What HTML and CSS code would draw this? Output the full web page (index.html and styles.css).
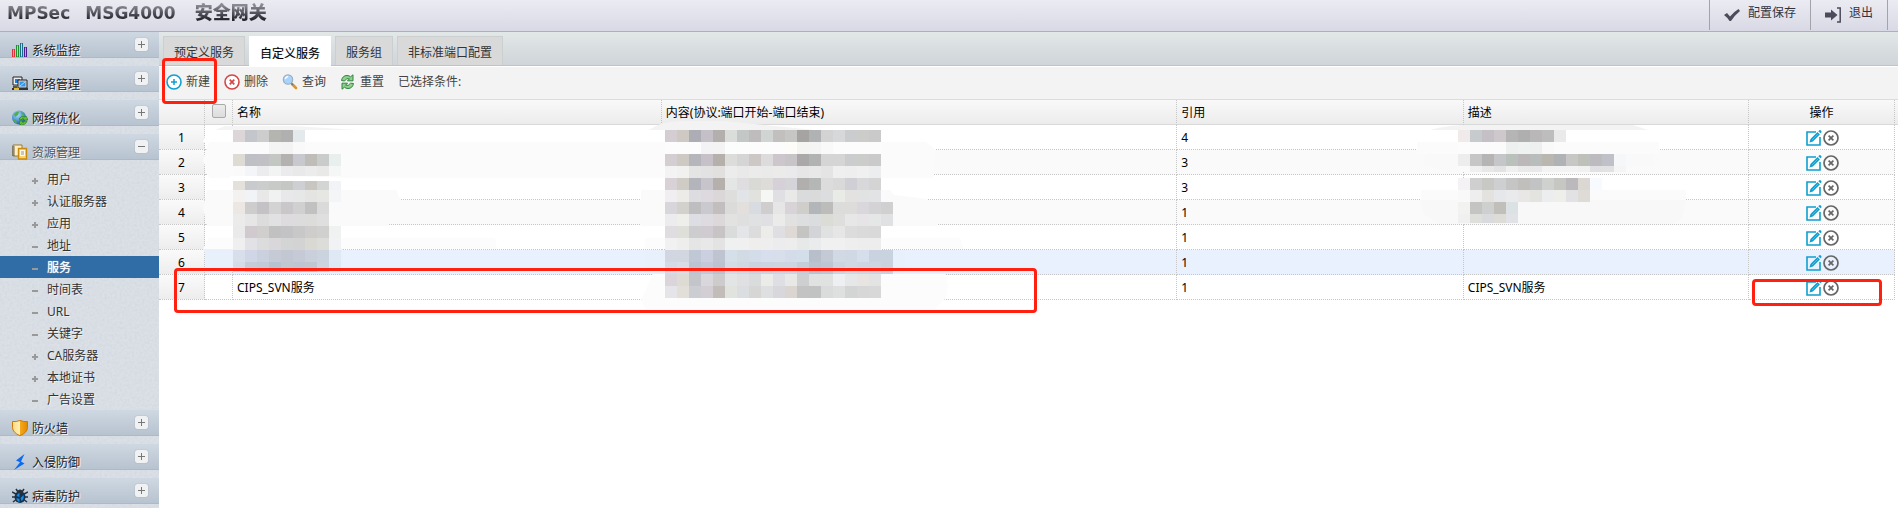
FILE: index.html
```html
<!DOCTYPE html>
<html lang="zh-CN">
<head>
<meta charset="utf-8">
<title>MPSec MSG4000 安全网关</title>
<link rel="stylesheet" href="styles.css">
</head>
<body>
<svg class="defs" width="0" height="0" aria-hidden="true">
  <linearGradient id="shield" x1="0" x2="1"><stop offset="0" stop-color="#ffd97a"/><stop offset=".5" stop-color="#fff0b8"/><stop offset=".52" stop-color="#f6a81c"/><stop offset="1" stop-color="#e08a00"/></linearGradient>
  <radialGradient id="globe" cx=".4" cy=".3" r=".7"><stop offset="0" stop-color="#a8dcff"/><stop offset="1" stop-color="#1c64b4"/></radialGradient>
  <symbol id="i-edit" viewBox="0 0 16 16"><path d="M10 2H1v13h13V7" fill="none" stroke="#0f9fd0" stroke-width="1.6"/><path d="M3.500 12.500l1-3.400L11.500 2l2.400 2.400-7 7z" fill="#0f9fd0"/><path d="M12.300 1.300l1-1q.8-.5 1.600.3t.6 1.700l-1 1z" fill="#0f9fd0"/><path d="M6 10l6-6" stroke="#7fd0ea" stroke-width=".6"/></symbol>
  <symbol id="i-del" viewBox="0 0 16 16"><circle cx="8" cy="8" r="7" fill="none" stroke="#666" stroke-width="1.700"/><path d="M5.600 5.600l4.800 4.800M10.400 5.600l-4.800 4.800" stroke="#666" stroke-width="1.700"/></symbol>
</svg>

<header class="topbar">
  <h1 class="brand"><span>MPSec</span><span>MSG4000</span><span class="brand-cn">安全网关</span></h1>
  <div class="top-actions">
    <button class="top-btn" type="button"><svg width="16" height="16" viewBox="0 0 16 16"><path d="M0 8l3-2 3 3.500Q9.500 5 14.500 2L16 4Q11 8 7 14H5.500Q4 11 0 8z" fill="#4b4b5c"/></svg>配置保存</button>
    <button class="top-btn" type="button"><svg width="16" height="16" viewBox="0 0 16 16"><path d="M0 5.500h6V2.500l6.500 5.500L6 13.500v-3H0z" fill="#4b4b5c"/><path d="M12 1h3.200v14H12" fill="none" stroke="#4b4b5c" stroke-width="1.500"/></svg>退出</button>
  </div>
</header>

<div class="shell">
  <nav class="sidebar">
    <svg class="grain" aria-hidden="true"><filter id="noise"><feTurbulence type="fractalNoise" baseFrequency=".4" numOctaves="2" seed="4"/><feColorMatrix values="0 0 0 0 .5  0 0 0 0 .56  0 0 0 0 .65  .5 0 0 0 -.17"/></filter><rect width="100%" height="100%" filter="url(#noise)"/></svg>
    <div class="group">
      <svg class="g-icon" viewBox="0 0 16 16"><path d="M0 7h3v8H0z" fill="#e0323c"/><path d="M1.500 7.500v7" stroke="#ff9aa0"/><path d="M4 3h3v12H4z" fill="#1f8f2f"/><path d="M5.500 3.500v11" stroke="#9ce69f"/><path d="M8 1h3v14H8z" fill="#1a6f88"/><path d="M9.500 1.500v13" stroke="#a5e2ee"/><path d="M12 5h3v10h-3z" fill="#4a1d8c"/><path d="M13.500 5.500v9" stroke="#c4a1e8"/></svg>
      <span>系统监控</span><button class="toggle plus" type="button" aria-label="展开系统监控"></button></div>
    <div class="group">
      <svg class="g-icon" viewBox="0 0 16 16"><path d="M1 1h9v8H1z" fill="#eee" stroke="#222"/><path d="M3 3h5v4H3z" fill="#1f7fe0"/><path d="M6 4h9v8H6z" fill="#ddd" stroke="#222"/><path d="M7.500 5.500h6v5h-6z" fill="#2f95ee"/><path d="M8 10l5-4" stroke="#a9dbff"/><path d="M0 13h16" stroke="#333" stroke-width="2"/><path d="M1 10h4v2H1z" fill="#555"/><path d="M2 13h5" stroke="#e7bd27" stroke-width="2"/></svg>
      <span>网络管理</span><button class="toggle plus" type="button" aria-label="展开网络管理"></button></div>
    <div class="group">
      <svg class="g-icon" viewBox="0 0 16 16"><circle cx="7" cy="7.500" r="7" fill="url(#globe)"/><path d="M2 4q3-3 5-2l-1 3-3 2zM1 9l3 1 1 4q-3-1-4-5zM9 2l4 2-3 1z" fill="#4fae4b"/><path d="M7 9q2-4 6-2l1-1 2 4h-5l1-1q-2-1-3 1zM15 11q-2 5-6 3l-1 1-1-4h4l-1 1q2 1 3-1z" fill="#63c529" stroke="#277d18" stroke-width=".7"/></svg>
      <span>网络优化</span><button class="toggle plus" type="button" aria-label="展开网络优化"></button></div>
    <div class="group open">
      <svg class="g-icon" viewBox="0 0 16 16"><path d="M1 1h9v11H1z" fill="#fff0bd" stroke="#a37821"/><path d="M0 3h3M0 5h3M0 7h3M0 9h3M0 11h3" stroke="#444" stroke-width=".8"/><path d="M6.500 4.500h8v10.500h-8z" fill="#ffd467" stroke="#c98a12" stroke-width="1.400"/><path d="M8 6h5v6H8z" fill="#fffbe8"/><path d="M9 8h3M9 10h3" stroke="#777" stroke-width=".8"/></svg>
      <span>资源管理</span><button class="toggle minus" type="button" aria-label="收起资源管理"></button></div>
    <ul class="menu">
      <li><a class="more" href="#">用户</a></li>
      <li><a class="more" href="#">认证服务器</a></li>
      <li><a class="more" href="#">应用</a></li>
      <li><a href="#">地址</a></li>
      <li><a class="current" href="#">服务</a></li>
      <li><a href="#">时间表</a></li>
      <li><a href="#">URL</a></li>
      <li><a href="#">关键字</a></li>
      <li><a class="more" href="#">CA服务器</a></li>
      <li><a class="more" href="#">本地证书</a></li>
      <li><a href="#">广告设置</a></li>
    </ul>
    <div class="group">
      <svg class="g-icon" viewBox="0 0 16 16"><path d="M.5 1.500Q4 2 8 .5q4 1.500 7.500 1v6q0 5-7.500 8.200Q.5 12.500.5 7.500z" fill="url(#shield)" stroke="#c97a08"/></svg>
      <span>防火墙</span><button class="toggle plus" type="button" aria-label="展开防火墙"></button></div>
    <div class="group">
      <svg class="g-icon" viewBox="0 0 16 16"><path d="M12.500 0L4 6.500l4 1.800L2 16l10.500-6.500L9 7.500z" fill="#0a6cf5"/></svg>
      <span>入侵防御</span><button class="toggle plus" type="button" aria-label="展开入侵防御"></button></div>
    <div class="group">
      <svg class="g-icon" viewBox="0 0 16 16"><path d="M4 1l2 3M12 1l-2 3M0 4l4 2M16 4l-4 2M0 9h4M16 9h-4M1 14l4-3M15 14l-4-3" stroke="#26313d" stroke-width="1.500"/><ellipse cx="8" cy="9" rx="5.500" ry="6" fill="#16324a"/><circle cx="8" cy="4" r="2.500" fill="#26313d"/><path d="M4.500 8q1-3 3-3v4zM8.500 10l3-3q1 4-2 6zM4.500 10l3 1v3q-3-1-3-4z" fill="#1589e8"/></svg>
      <span>病毒防护</span><button class="toggle plus" type="button" aria-label="展开病毒防护"></button></div>
  </nav>

  <main class="main">
    <div class="tabs" role="tablist">
      <button class="tab" role="tab" type="button">预定义服务</button>
      <button class="tab active" role="tab" type="button" aria-selected="true">自定义服务</button>
      <button class="tab" role="tab" type="button">服务组</button>
      <button class="tab" role="tab" type="button">非标准端口配置</button>
    </div>
    <div class="toolbar">
      <button class="tool marked" type="button"><svg width="16" height="16" viewBox="0 0 16 16"><circle cx="8" cy="8" r="7" fill="#fff" stroke="#0f9fd0" stroke-width="1.600"/><path d="M8 5v6M5 8h6" stroke="#0f9fd0" stroke-width="1.500"/></svg>新建</button>
      <button class="tool" type="button"><svg width="16" height="16" viewBox="0 0 16 16"><circle cx="8" cy="8" r="7" fill="#fff" stroke="#d64545" stroke-width="1.600"/><path d="M5.700 5.700l4.600 4.600M10.300 5.700l-4.600 4.600" stroke="#d64545" stroke-width="1.700"/></svg>删除</button>
      <button class="tool" type="button"><svg width="16" height="16" viewBox="0 0 16 16"><path d="M10 10l4 4" stroke="#d9962f" stroke-width="2.600" stroke-linecap="round"/><path d="M9 9l2 2" stroke="#777" stroke-width="1.500"/><circle cx="6" cy="5.500" r="4.700" fill="#a9d4fa" stroke="#9bb0c6" stroke-width="1.200"/><path d="M3.200 5q.8-2.300 3-2.500" fill="none" stroke="#fff" stroke-width="1.400"/></svg>查询</button>
      <button class="tool" type="button"><svg width="16" height="16" viewBox="0 0 16 16"><path d="M1.500 6.500Q2.500 1.500 7 1.500q2.200 0 3.500 1.300L13 .8v6H7.500l2-2Q6.500 3.500 4.500 7zM13.500 9.500Q12.500 14.500 8 14.500q-2.200 0-3.500-1.300L2 15.200v-6h5.500l-2 2q3 1.300 5-2z" fill="#8fd08f" stroke="#2f8540" stroke-width="1"/></svg>重置</button>
      <span class="picked">已选择条件:</span>
    </div>
    <div class="grid-wrap">
      <table class="grid">
        <colgroup><col class="c-no"><col class="c-check"><col class="c-name"><col class="c-content"><col class="c-ref"><col class="c-desc"><col class="c-op"></colgroup>
        <thead>
          <tr><th></th><th class="check"><input type="checkbox" aria-label="全选"></th><th>名称<svg class="mosaic m-name" data-mosaic="name" width="432" height="170"></svg></th><th>内容(协议:端口开始-端口结束)<svg class="mosaic m-content" data-mosaic="content" width="300" height="170"></svg></th><th>引用</th><th>描述<svg class="mosaic m-desc" data-mosaic="desc" width="240" height="100"></svg></th><th class="op">操作</th></tr>
        </thead>
        <tbody>
          <tr><td class="no">1</td><td></td><td></td><td></td><td>4</td><td></td><td class="op"></td></tr>
          <tr><td class="no">2</td><td></td><td></td><td></td><td>3</td><td></td><td class="op"></td></tr>
          <tr><td class="no">3</td><td></td><td></td><td></td><td>3</td><td></td><td class="op"></td></tr>
          <tr><td class="no">4</td><td></td><td></td><td></td><td>1</td><td></td><td class="op"></td></tr>
          <tr><td class="no">5</td><td></td><td></td><td></td><td>1</td><td></td><td class="op"></td></tr>
          <tr class="hover"><td class="no">6</td><td></td><td></td><td></td><td>1</td><td></td><td class="op"></td></tr>
          <tr><td class="no">7</td><td></td><td>CIPS_SVN服务</td><td></td><td>1</td><td>CIPS_SVN服务</td><td class="op"></td></tr>
        </tbody>
      </table>
      <div class="mark mark-row"></div>
      <div class="mark mark-op"></div>
    </div>
  </main>
</div>
<script src="app.js"></script>
</body>
</html>
```

FILE: styles.css
```css
* { box-sizing: border-box; }
body {
  margin: 0;
  min-height: 100vh;
  display: flex;
  flex-direction: column;
  overflow: hidden;
  background: #fff;
  color: #000;
  font: 12px/18px "Noto Sans", "Noto Sans CJK SC", sans-serif;
}
button { font: inherit; color: inherit; border: 0; background: none; padding: 0; margin: 0; }
.defs { position: absolute; }

/* top bar */
.topbar {
  display: flex;
  justify-content: space-between;
  height: 32px;
  border-bottom: 1px solid #aeaebc;
  background: linear-gradient(#ebebf2, #d9d9e6);
}
.brand {
  display: flex;
  align-items: center;
  gap: 15px;
  height: 26px;
  margin: 0 0 0 7px;
  font: bold 17px/26px "DejaVu Sans", "Noto Sans CJK SC", sans-serif;
}
.brand span {
  background: linear-gradient(#8a8a92 20%, #26262e 75%);
  -webkit-background-clip: text;
  background-clip: text;
  color: transparent;
}
.brand .brand-cn { margin-left: 4px; font-size: 18px; font-weight: 900; }
.top-actions { display: flex; height: 30px; padding-right: 10px; }
.top-btn {
  display: flex;
  align-items: center;
  gap: 8px;
  padding: 0 14px 4px;
  border-left: 1px solid #a3a3ab;
  color: #33333f;
}
.top-btn:last-child { border-right: 1px solid #a3a3ab; }
.top-btn svg { margin-top: 3px; }

.shell { display: flex; flex: 1; height: calc(100vh - 32px); }

/* side navigation */
.sidebar { position: relative; flex: 0 0 159px; overflow: hidden; background: #dbe0e6; }
.grain { position: absolute; inset: 0; width: 100%; height: 100%; }
.group {
  position: relative;
  display: flex;
  align-items: center;
  gap: 4px;
  height: 34px;
  padding: 4px 11px 0 12px;
  background: linear-gradient(#cfd8e2, #b7c3d0 25px, #a9bac8 25px) no-repeat 0 0 / 100% 26px;
  color: #1c1c1c;
  text-shadow: 1px 1px 0 #f4f6f8;
}
.group.open { color: #555; }
.g-icon { width: 16px; height: 16px; flex: none; margin-top: -2px; }
.toggle {
  align-self: flex-start;
  width: 13px;
  height: 13px;
  margin: 2px 0 0 auto;
  border-radius: 2px;
  box-shadow: 0 0 1px #888;
  background: linear-gradient(#777, #777) center / 7px 1px no-repeat, #f0f1f3;
}
.toggle.plus {
  background: linear-gradient(#777, #777) center / 7px 1px no-repeat, linear-gradient(#777, #777) center / 1px 7px no-repeat, #f0f1f3;
}
.menu { position: relative; margin: 0; padding: 0; list-style: none; }
.menu a {
  display: flex;
  align-items: center;
  gap: 9px;
  height: 22px;
  padding: 2px 0 0 32px;
  color: #333;
  text-decoration: none;
  text-shadow: 1px 1px 0 #eef1f4;
}
.menu a::before {
  content: "";
  width: 6px;
  height: 6px;
  margin-top: 2px;
  background: linear-gradient(#999, #999) center / 6px 2px no-repeat;
}
.menu .more::before {
  background: linear-gradient(#999, #999) center / 6px 2px no-repeat, linear-gradient(#999, #999) center / 2px 6px no-repeat;
}
.menu .current { background: #306da6; color: #fff; text-shadow: 0 0 1px #fff; }

/* tabs and toolbar */
.main { flex: 1; min-width: 0; }
.tabs {
  display: flex;
  align-items: flex-end;
  gap: 4px;
  height: 34px;
  padding-left: 4px;
  border-bottom: 1px solid #bfc3c5;
  background: linear-gradient(#e2e7e8, #cfd5d8);
}
.tab {
  height: 29px;
  padding: 4px 10px 0;
  border: 1px solid #cbcfd0;
  border-bottom: 0;
  background: #d9d9d9;
  color: #333;
}
.tab.active { height: 30px; margin-bottom: -1px; border-color: #fff; background: #fff; color: #000; text-shadow: 0 0 1px #bbb; }
.toolbar {
  position: relative;
  z-index: 2;
  display: flex;
  align-items: center;
  gap: 14px;
  height: 34px;
  padding: 0 7px 2px;
  border-top: 1px solid #fff;
  border-bottom: 1px solid #dcdcdc;
  background: #f3f3f3;
  color: #444;
}
.tool { position: relative; display: flex; align-items: center; gap: 4px; }
.tool.marked::after {
  content: "";
  position: absolute;
  inset: -15px -7px -13px -4px;
  border: 3px solid #ff2010;
  border-radius: 4px;
}

/* data table */
.grid-wrap { position: relative; padding-right: 3px; background: linear-gradient(#f9f9f9, #ececec 24px, #d9d9d9 24px, #d9d9d9 25px, #fff 25px); }
.grid { width: 100%; table-layout: fixed; border-spacing: 0; }
.c-no { width: 46px; }
.c-check { width: 28px; }
.c-name { width: 24.7%; }
.c-content { width: 29.7%; }
.c-ref { width: 16.5%; }
.c-op { width: 146px; }
.grid th, .grid td {
  height: 25px;
  padding: 2px 4px 0;
  border-right: 1px dotted #c6c6c6;
  border-bottom: 1px dotted #c6c6c6;
  text-align: left;
  font-weight: normal;
  white-space: nowrap;
}
.grid th { position: relative; border-bottom: 1px solid #d9d9d9; }
.grid tbody tr { background: #fff; }
.grid tbody tr:nth-child(even) { background: #fafafa; }
.grid tbody .hover { background: #e9f1ff !important; }
.grid .no { background: linear-gradient(#fafafa, #ededed); text-align: center; }
.grid .op { text-align: center; }
.op-icons { display: flex; justify-content: center; gap: 1px; padding-left: 1px; }
.op-icons button { display: flex; }
.grid .check { padding: 0; text-align: center; }
.check input {
  appearance: none;
  display: block;
  width: 14px;
  height: 14px;
  margin: -2px auto 0;
  border: 1px solid #aaa;
  border-radius: 2px;
  background: linear-gradient(#ececec, #dcdcdc);
}

/* redaction and markers over the table */
.mosaic { position: absolute; top: 30px; z-index: 1; overflow: visible; }
.m-name { left: 0; }
.m-content { left: 3px; }
.m-desc { left: -6px; }
.mark { position: absolute; z-index: 2; border: 3px solid #ff2010; border-radius: 4px; }
.mark-row { left: 15px; top: 168px; width: 49.6%; height: 45px; }
.mark-op { right: 16px; top: 179px; width: 130px; height: 27px; }
```

FILE: app.js
```js
const CELL = 12;

/* Each column: pale smears [fill, path], then rows of [y, height, colours]. */
const mosaics = {
  name: {
    smears: [
      ["#f4f4f4", "M-18 0L-8 -4H60L125 0z"],
      ["#ffffff", "M-26 0H430V12H-30z"],
      ["#fbfbfb", "M-24 12H430V48H-24L-30 30z"],
      ["#ffffff", "M0 45L125 48H430V60H-20z"],
      ["#fafafa", "M-26 60H163L170 74L163 84L155 96H-26L-30 78z"],
      ["#ffffff", "M-28 96H235V108H-28z"],
      ["#fcfcfc", "M-24 108H262L264 119H-30z"],
      ["#e8f0fc", "M-30 119H110V136L60 141H-20z"]
    ],
    rows: [
      [0, 12, "ddd6d8 c3c7cb cdcdcd b4b5b0 b0b0b0 e4e9ec"],
      [12, 12, "fbfbfb fbfbfb fbfbfb f4f4f4 f3f3f3 f9f9f9"],
      [24, 12, "dedbd5 bfc0c6 c0c0c5 c4c6c4 b4b2b0 c8c9ce bfbdb8 cacccb e9eeef"],
      [36, 10, "fafafa f4f5f8 ececee f2f4f3 ebebee e9e9ea ececec e9e9e7 f5f7f7"],
      [51, 9, "e4e0da c8cacd cbcccc c8cac8 c5c7c5 cdcfd2 c9c6c1 d3d5d4 f1f3f6"],
      [60, 12, "f4f2f0 f2f3f6 e8e8e8 f0f2f1 e8e8ea e6e8e7 e4e4e2 e6e6e2 f4f5f7"],
      [72, 12, "ede7e4 cdcdcd c4c2c4 d3d3d4 c9c7ca d0d0d1 c1c1c1 dadada"],
      [84, 12, "ebebeb e6e6e6 dcdcdc e1e0e3 dddbdd dcdcdc dcdcda dfdfdf"],
      [96, 12, "eaeaea d0cacf d0cfce c2c1c2 c3c2c4 c8c8c8 cfcdcb d0d1ce f0f1f1"],
      [108, 12, "efefef e2e1e5 dcdcdc d9d7d9 d3d5d4 d2d3d2 d9d8d2 dcdcd9 f0f2f3"],
      [120, 12, "d9dfea d0d6e5 cad0dd c5cad5 c2c7d2 c5cad6 c9d0dc cbd3de dee9f5"],
      [132, 10, "d5dbe7 c5cbd9 c2cad8 b6c2d0 bfc8d0 bfc5d2 c0c7d1 ccd4df dde8f6"]
    ]
  },
  content: {
    smears: [
      ["#f3f3f3", "M-16 0Q-4 -9 20 -9H60L150 0z"],
      ["#ffffff", "M-20 0H216V12H-20z"],
      ["#fbfbfb", "M-20 12H261L271 20L268 48H-20z"],
      ["#ffffff", "M-24 48H216V60H-24z"],
      ["#fafafa", "M-24 60H225L229 65L262 69L273 84L272 96H-24z"],
      ["#ffffff", "M-20 96H240V108H-20z"],
      ["#fcfcfc", "M-20 108H295L299 119H-20z"],
      ["#e8f0fc", "M-20 120H240V144H-20z"],
      ["#fcfcfc", "M-12 144H280L283 155L281 168L270 179H-20L-24 170z"]
    ],
    rows: [
      [0, 12, "d4ced2 cec9c2 adaeb5 c5c0c7 b3afac dbdddb c3c7c6 bebcbc d0d4d2 c1c0be c6c6c5 a5a4a3 b1b2b4 d3d3d3 d7d8d9 cacccd cccdcb cacaca"],
      [12, 12, "fcfcfc fcfcfc fcfcfc f3f2f4 f3f3f4 fafdfb fcfcfc fcfcfc fcfcfc fcfcfc fdfcf9 f4f4f2 f4f4f4 f9f9f9 fcfcfc fcfcfc fcfcfc fcfcfc"],
      [24, 12, "d4ced2 cec9c3 b5b6bb c6c1c9 b5b0ac dcddda d5d5d5 cdc8c6 dbdcdb cdc6cd c7c5c8 aaa8a8 b1b3b2 d5d5d5 d5d5d5 cacccd cccdcb cacaca"],
      [36, 12, "f3f3f3 f1f1f0 e4e4e4 e3e2e3 e1e0df ececec e9e9e9 ebebeb eaeaea ebebea eaeaec e6e6e6 e8e8e8 e4e4e4 efefef eeeeee f0f0f0 ecedef"],
      [48, 12, "d8d1d5 cfccc5 b4b4bc c8c4cb b6b0ac e4e6e5 dfdde0 d9dad6 dddcd9 d6d1d9 d5d4d8 b1afae b5b7b6 dcdcdd d9d9d9 cfcfd5 d8d7da d4d4d4"],
      [60, 12, "f0eef1 ecebe8 dcdce1 ddd9de dbd7d9 dededc e1e5e7 e1e1de f4f7f4 e0dfe4 e9eae7 dadbdc dadada dcddde e9ebe7 e4e2e0 e0e3e1 e1e3e5"],
      [72, 12, "d8d6da d2d1cc bebec1 cbc9d0 c2bebe dbdcda e3dfdc d8dce1 d0cdcf e5e6e5 d8d3d6 d0ceca b2b6b8 bcbcba dcdddb dddcdb d9d7db d3d3d5 d0d0d0"],
      [84, 12, "ececef eeeeea dddee3 dddbe0 dcd8da e2e2e1 e0dfdf e0e1e2 dfdfe4 ebecea e1e1e1 dddedf dbdcdd dcdcd7 dedfdd e7e7e8 e6e4e7 e5e6e6 e0e1e3"],
      [96, 12, "dfdddf dfdfda cdcdd0 cfcbd0 c8c3c4 dadbdb e4e5e8 dcdcdd ecedeb dfdee3 ded9d5 c4c4c2 d3d4d7 e0e1e1 e6e6e7 dbdcdb dadada d9d9d9"],
      [108, 12, "f1f1f1 eeeeed e5e5e6 e8e8e9 e4e3e3 eff0f0 eff0ef f0eeed eeeeee ececef ededed e7e9e8 eaebec f0f0f0 f0f0f0 eeeeee ededed ededed"],
      [120, 12, "d1d6e0 d1d6df c1c8d5 cccfdf bfc4d1 d5dfe8 d2dae3 d3dce9 d8dfec d8deea d4dcea d2dfeb b8bfcb c3cad4 d1d9e5 cfd8e3 d7deeb c9d2df c9d3df"],
      [132, 12, "d5dae9 d9dde7 bcc4d4 c4c9da bcc2cf d3dce6 d0d8e3 ccd3e0 cbd5e1 cdd5e1 ccd5e1 c4cedb bac4d1 bdc6d2 ccd5df d0d8e4 ced6e3 ccd5e1 cad2df"],
      [144, 12, "dbd4da dedbd5 c3c5cb d9d6dc cecbcd e3e4e4 e0e0e3 dadbdc ebebe8 dfdee4 e8e9e7 cecfd0 e0e1e1 e0e1e1 edeff3 e5e7e9 e7e4e1 e2e3e2"],
      [156, 12, "e5e4e8 e2dfd8 cbcdd3 d3ced4 c2bdb9 e1e3df dbdee0 d6d6d5 dedfe1 d8d7dc dad5d1 c2c3c2 c1c3c2 dadcdc dde0df d3d4d4 d7d7d7 d8d8d8"]
    ]
  },
  desc: {
    smears: [
      ["#f3f3f3", "M-28 0Q-10 -5 10 -5H175L190 0z"],
      ["#ffffff", "M-36 0H200V12H-40z"],
      ["#fbfbfb", "M-41 12H201V24H-41z"],
      ["#f9f9f9", "M-32 24H195V36L60 42H-10L-35 34z"],
      ["#ffffff", "M-18 48H180V60H-18z"],
      ["#fbfbfb", "M-37 60H228V72H-37z"],
      ["#f8f8f8", "M-38 70H228L224 88L215 94L60 94H-20L-34 84z"]
    ],
    rows: [
      [0, 12, "f0eaea c6ccce c5c0c5 cec8cd b5b5b6 afafaf b9b7b8 bdbdbd eaeaea"],
      [12, 12, "fcfcfc fbfbfb fbfbfb fbfbfb eef0ef eef3f1 eef0ef f9f9f9"],
      [24, 12, "ededed c6c6c6 b7b5b3 c5c6ca bac0bb bcb7b9 b8bcba bab6b0 b1b2b5 c7c8c5 bec0ba bdbbc0 c0c0c8 f6f7f9"],
      [36, 6, "fafafa f0f0f0 e9e8e9 e3e3e4 f0f0f0 ebeaeb e9e9ec f3f3f3 f3f3f3 f3f3f3 f1f1f1 e1e1e4 e2e2e4 f5f5f6"],
      [48, 12, "f4f2f4 cfcfd0 c8c9c5 cecfd1 c5c5c5 c0bfbb c2c3c5 cfd1ce c6c7c2 bbb9bb dbd7d3 f7fbff"],
      [60, 12, "f9f9f9 eeeeef e3e2df e6e7ea e9eaec e8e7e5 e3e3e0 ecedef eeeeea e2e2e4 dfdcd8"],
      [72, 12, "f2f2f0 c4c4c2 ced0cf c0bfba dce1e4"],
      [84, 9, "f0f0f0 dedfda d8dadd dddcd6 e0e2e6"]
    ]
  }
};

const SVG = "http://www.w3.org/2000/svg";
function add(parent, tag, attrs) {
  const node = document.createElementNS(SVG, tag);
  for (const key in attrs) node.setAttribute(key, attrs[key]);
  parent.appendChild(node);
}

document.querySelectorAll("[data-mosaic]").forEach(svg => {
  const { smears, rows } = mosaics[svg.dataset.mosaic];
  smears.forEach(([fill, d]) => add(svg, "path", { fill, d }));
  rows.forEach(([y, height, colours]) => {
    colours.split(" ").forEach((c, i) => add(svg, "rect", { x: i * CELL, y, width: CELL, height, fill: "#" + c }));
  });
});

document.querySelectorAll("td.op").forEach(cell => {
  cell.innerHTML = '<div class="op-icons">' +
    '<button type="button" aria-label="编辑"><svg width="16" height="16"><use href="#i-edit"/></svg></button>' +
    '<button type="button" aria-label="删除"><svg width="16" height="16"><use href="#i-del"/></svg></button></div>';
});
```
